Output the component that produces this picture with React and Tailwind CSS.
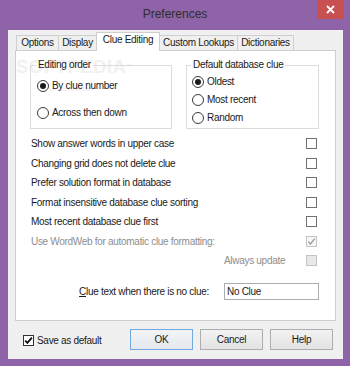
import React from "react";

function CheckBox({ checked = false, variant = "normal" }) {
  const box =
    variant === "disabled"
      ? "border-[#c4c4c4] bg-[#f7f7f7]"
      : variant === "disabledEmpty"
      ? "border-[#c4c4c4] bg-[#e8e8e8]"
      : variant === "dark"
      ? "border-[#333333] bg-white"
      : "border-[#707070] bg-white";
  const stroke = variant === "disabled" ? "#9a9a9a" : "#111111";
  return (
    <div className={`w-[11px] h-[11px] border flex items-center justify-center shrink-0 ${box}`}>
      {checked && (
        <svg width="9" height="9" viewBox="0 0 9 9">
          <path d="M1.2 4.6 L3.4 6.9 L7.8 1.6" fill="none" stroke={stroke} strokeWidth={variant === "dark" ? 1.8 : 1.3} />
        </svg>
      )}
    </div>
  );
}

function Radio({ checked, label }) {
  return (
    <div className="h-[13px] flex items-center">
      <div className="w-[12px] h-[12px] rounded-full border border-[#3a3a3a] bg-white flex items-center justify-center shrink-0">
        {checked && <div className="w-[6px] h-[6px] rounded-full bg-[#1a1a1a]" />}
      </div>
      <span className="ml-[3px] leading-[13px]">{label}</span>
    </div>
  );
}

function Row({ label, checked, variant, muted }) {
  return (
    <div className="h-[19.5px] flex items-center pl-[15px] pr-[18px]">
      <span className={muted ? "text-[#8d8d8d]" : ""}>{label}</span>
      <div className="ml-auto">
        <CheckBox checked={checked} variant={variant} />
      </div>
    </div>
  );
}

function Tab({ label, w, selected }) {
  if (selected) {
    return (
      <div
        className={`${w} h-[19px] ml-[-1px] mb-[-1px] relative z-10 bg-white border-t border-l border-r border-[#cfcfcf] pt-[1px] text-center leading-[12px]`}
      >
        {label}
      </div>
    );
  }
  return (
    <div
      className={`${w} h-[15px] ml-[-1px] bg-[#f0f0f0] border-t border-l border-r border-[#cfcfcf] pt-[1px] text-center leading-[12px]`}
    >
      {label}
    </div>
  );
}

function Button({ children, primary }) {
  return (
    <div
      className={`w-[63px] h-[21px] flex items-center justify-center border ${
        primary
          ? "border-[#6fa9e0] bg-gradient-to-b from-[#f2f4f7] to-[#e5e8ec]"
          : "border-[#adadad] bg-gradient-to-b from-[#f2f2f2] to-[#e3e3e3]"
      }`}
    >
      {children}
    </div>
  );
}

export default function App() {
  return (
    <div
      className="w-[350px] h-[366px] bg-[#8e63a8] flex flex-col text-[10px] tracking-[-0.3px] text-[#1a1a1a]"
      style={{ fontFamily: '"Liberation Sans", Arial, sans-serif' }}
    >
      {/* title bar */}
      <div className="h-[30px] flex items-start shrink-0">
        <div className="w-[33px] shrink-0" />
        <div className="flex-1 h-[30px] flex items-center justify-center pb-[2px] text-[12px] tracking-normal text-[#2e2e2e]">
          Preferences
        </div>
        <div className="w-[27px] h-[19px] mr-[6px] bg-[#c75050] flex items-center justify-center shrink-0">
          <svg width="9" height="9" viewBox="0 0 9 9">
            <path d="M1 1 L8 8 M8 1 L1 8" stroke="#ffffff" strokeWidth="1.8" />
          </svg>
        </div>
      </div>

      {/* client area */}
      <div className="ml-[8px] mr-[7px] mb-[7px] flex-1 bg-[#f0f0f0] flex flex-col">
        {/* tabs */}
        <div className="pt-[2px] h-[20px] pl-[9px] flex items-end shrink-0">
          <Tab label="Options" w="w-[43px]" />
          <Tab label="Display" w="w-[39px]" />
          <Tab label="Clue Editing" w="w-[64px]" selected />
          <Tab label="Custom Lookups" w="w-[79px]" />
          <Tab label="Dictionaries" w="w-[57px]" />
        </div>

        {/* panel */}
        <div className="mx-[7px] h-[271px] bg-white border border-[#cfcfcf] relative flex flex-col shrink-0">
          <div className="absolute left-[0px] top-[6px] pointer-events-none select-none text-[18.5px] font-bold tracking-[0.5px] text-[#f1f1f1] leading-[20px]">
            SOFTPEDIA<span className="text-[7px] align-top">™</span>
          </div>
          <div className="absolute left-[33px] top-[35px] pointer-events-none select-none text-[5px] tracking-normal text-[#ededed]">
            www.softpedia.com
          </div>

          {/* groups */}
          <div className="pt-[8px] pl-[14px] pr-[16px] flex gap-[14px] relative">
            <fieldset className="w-[142px] h-[70px] border border-[#dcdcdc]">
              <legend className="ml-[5px] px-[2px] leading-[12px]">Editing order</legend>
              <div className="pl-[6px] pt-[8px] flex flex-col gap-[14px]">
                <Radio checked label="By clue number" />
                <Radio label="Across then down" />
              </div>
            </fieldset>
            <fieldset className="w-[133px] h-[70px] border border-[#dcdcdc]">
              <legend className="ml-[4px] px-[2px] leading-[12px]">Default database clue</legend>
              <div className="pl-[5px] pt-[4px] flex flex-col gap-[5px]">
                <Radio checked label="Oldest" />
                <Radio label="Most recent" />
                <Radio label="Random" />
              </div>
            </fieldset>
          </div>

          {/* checkbox rows */}
          <div className="mt-[5px] flex flex-col">
            <Row label="Show answer words in upper case" />
            <Row label="Changing grid does not delete clue" />
            <Row label="Prefer solution format in database" />
            <Row label="Format insensitive database clue sorting" />
            <Row label="Most recent database clue first" />
            <Row label="Use WordWeb for automatic clue formatting:" checked variant="disabled" muted />
            <div className="h-[19.5px] flex items-center pl-[208px] pr-[18px]">
              <span className="text-[#8d8d8d]">Always update</span>
              <div className="ml-auto">
                <CheckBox variant="disabledEmpty" />
              </div>
            </div>
          </div>

          {/* clue text */}
          <div className="mt-[12px] flex items-center justify-end pr-[16px]">
            <span className="mr-[15px]">
              <span className="underline">C</span>lue text when there is no clue:
            </span>
            <div className="w-[95px] h-[17px] border border-[#acacac] bg-white flex items-center pl-[2px]">
              No Clue
            </div>
          </div>
        </div>

        {/* bottom */}
        <div className="flex items-start pt-[8px] pl-[15px] pr-[10px]">
          <div className="flex items-center mt-[6px]">
            <CheckBox checked variant="dark" />
            <span className="ml-[3px] leading-[11px]">Save as default</span>
          </div>
          <div className="ml-auto flex gap-[7px]">
            <Button primary>OK</Button>
            <Button>Cancel</Button>
            <Button>Help</Button>
          </div>
        </div>
      </div>
    </div>
  );
}
